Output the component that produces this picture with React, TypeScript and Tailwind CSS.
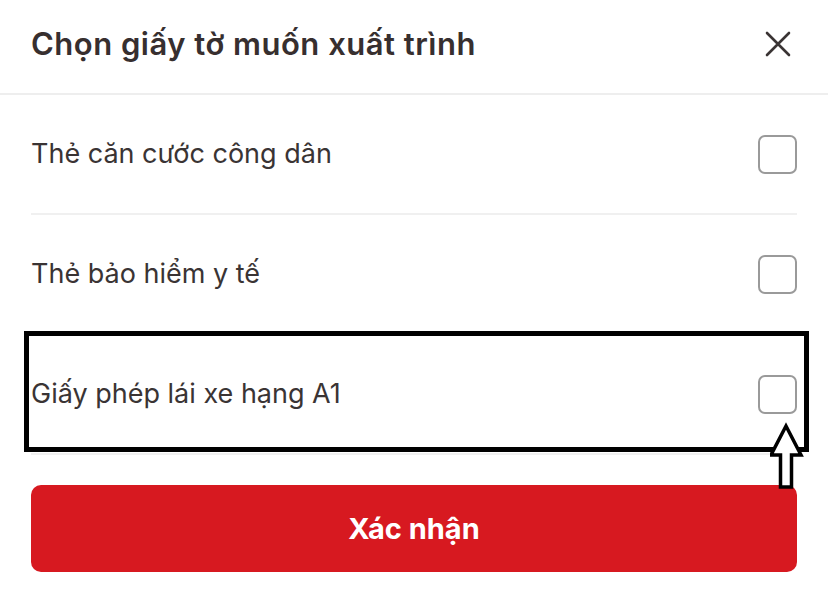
const items = ["Thẻ căn cước công dân", "Thẻ bảo hiểm y tế", "Giấy phép lái xe hạng A1"];

export default function App() {
  return (
    <div
      className="relative h-[596px] w-[828px] overflow-hidden bg-white text-[#3a3434]"
      style={{ fontFamily: "Inter, 'Noto Sans', sans-serif" }}
    >
      <div className="flex h-[95px] items-center justify-between border-b-2 border-[#eeeeee] pl-[31px] pr-[36px]">
        <h1 className="pb-[4px] text-[31px] font-semibold tracking-[0.5px] text-[#372f2f]">
          Chọn giấy tờ muốn xuất trình
        </h1>
        <svg width="28" height="28" viewBox="0 0 28 28" className="mb-[6px]">
          <path d="M3 3 L25 25 M25 3 L3 25" stroke="#3a3434" strokeWidth="2.6" strokeLinecap="round" />
        </svg>
      </div>

      <ul className="px-[31px]">
        {items.map((label) => (
          <li key={label} className="flex h-[120px] items-center justify-between border-b-2 border-[#f0f0f0]">
            <span className="text-[27px]">{label}</span>
            <span className="h-[39px] w-[39px] rounded-[7px] border-2 border-[#9a9a9a]" />
          </li>
        ))}
      </ul>

      <div className="px-[31px] pt-[30px]">
        <button
          type="button"
          className="flex h-[87px] w-full items-center justify-center rounded-[10px] bg-[#d71920] text-[29px] font-bold text-white"
        >
          Xác nhận
        </button>
      </div>

      {/* annotation overlay */}
      <div className="pointer-events-none absolute left-[24px] top-[331px] h-[121px] w-[785px] border-[5px] border-black" />
      <svg
        className="pointer-events-none absolute left-[770px] top-[422px]"
        width="34"
        height="70"
        viewBox="0 0 34 70"
      >
        <polygon
          points="16,4 31,33 21.5,33 21.5,65 10.5,65 10.5,33 1,33"
          fill="white"
          stroke="black"
          strokeWidth="3.5"
          strokeLinejoin="miter"
        />
      </svg>
    </div>
  );
}
